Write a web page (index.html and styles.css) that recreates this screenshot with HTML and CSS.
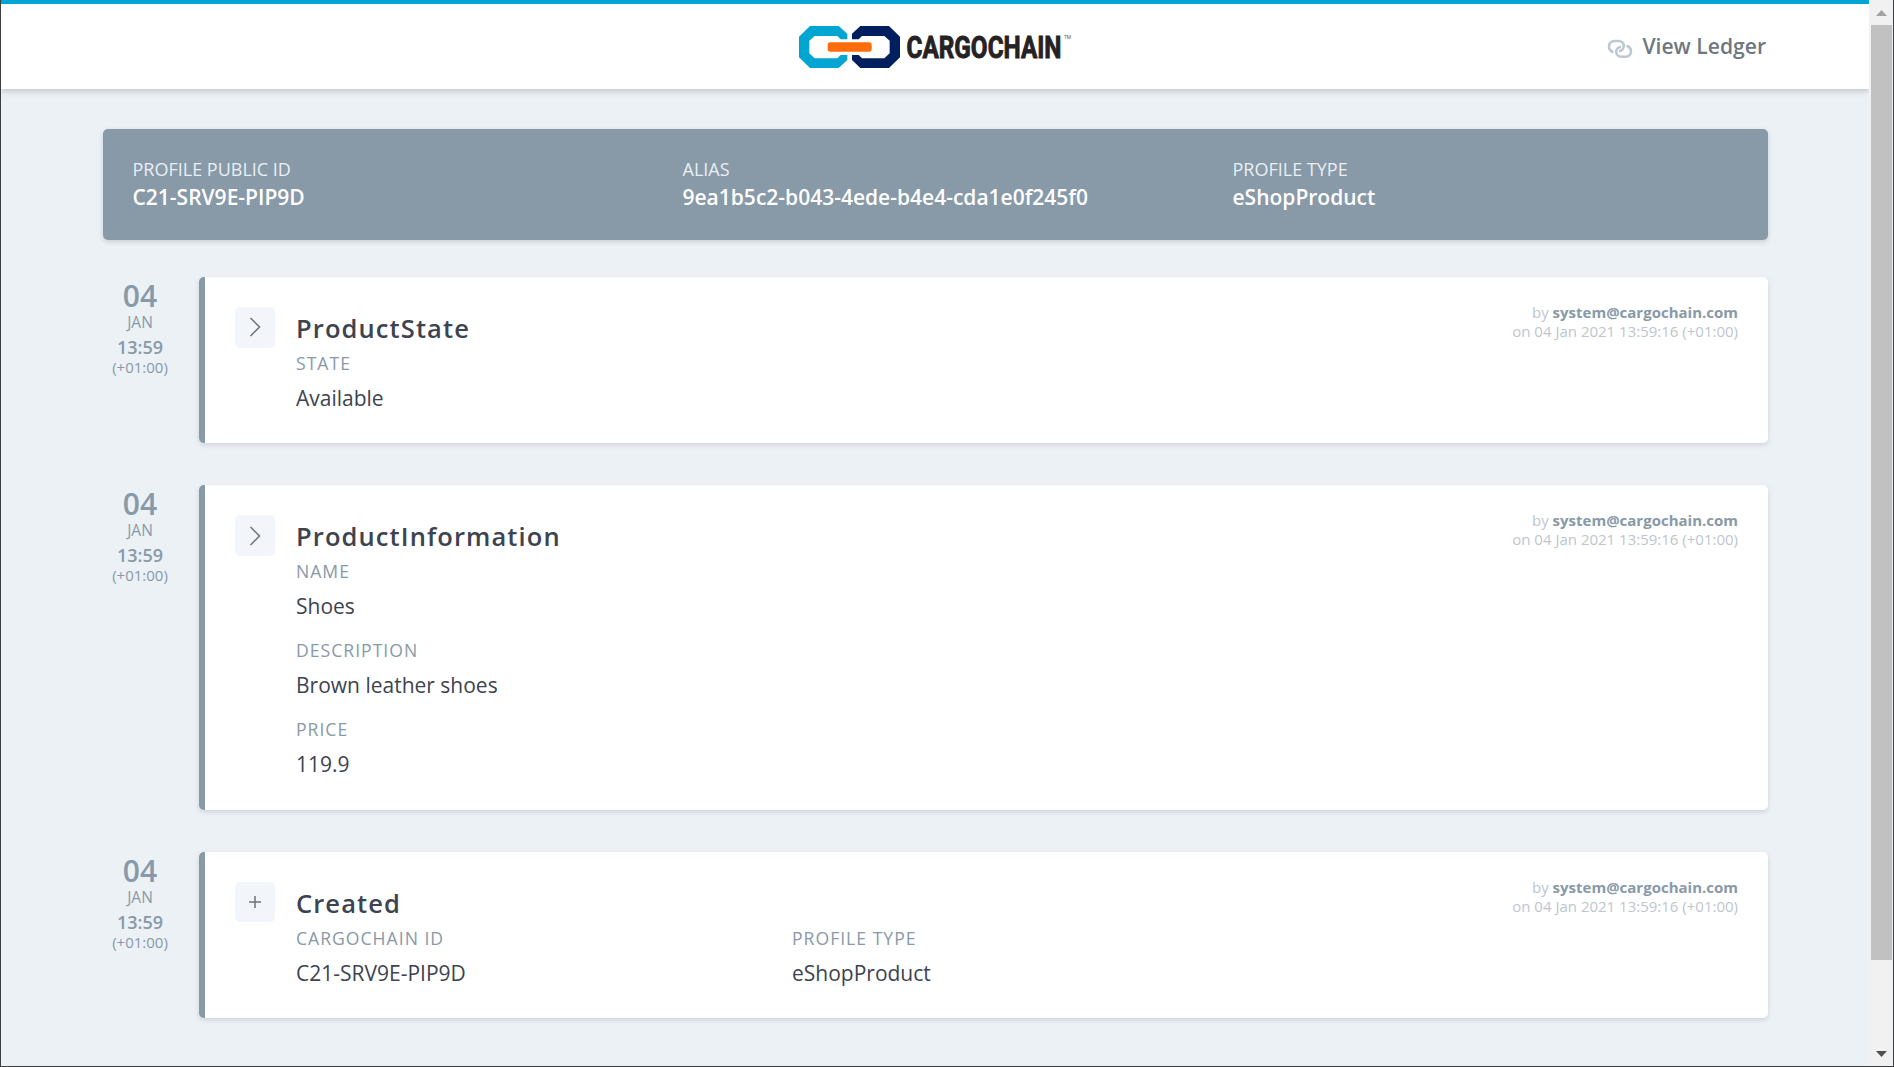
FILE: index.html
```html
<!DOCTYPE html>
<html lang="en">
<head>
<meta charset="utf-8">
<title>Cargochain</title>
<link rel="stylesheet" href="styles.css">
</head>
<body>
<div class="window">
  <div class="page">
    <header class="topbar">
      <svg class="logo" width="274" height="46" viewBox="0 0 274 46">
        <g transform="translate(-17 -24) scale(.33333)">
          <path fill="#00a5d1" d="M90 78H176L202 101V118H182L172 108H104L88 122V160L104 175H172L182 165H202V180L176 204H90L57 172V110Z"/>
          <path fill="#001f5f" d="M327 78H241L216 101V118H236L246 108H313L329 122V160L313 175H246L236 165H216V180L241 204H327L360 172V110Z"/>
          <rect x="143" y="127" width="132" height="28" rx="8" fill="#ff6c0c"/>
        </g>
        <text class="logo-word" x="109.500" y="34" textLength="155" lengthAdjust="spacingAndGlyphs">CARGOCHAIN</text>
        <text class="logo-tm" x="267" y="14.500" textLength="7" lengthAdjust="spacingAndGlyphs">TM</text>
      </svg>
      <a class="ledger">
        <svg width="26" height="20" viewBox="0 0 26 20" fill="none" stroke="#bcc7cf" stroke-width="2.500">
          <path d="M6.500 13.200C3.300 12.300 2 9.800 2 7.200C2 4 4.300 2 7.500 2H11.500C14.700 2 16.800 4.200 16.800 7C16.800 9.800 14.700 12 12 12"/>
          <path d="M19.500 6.800C22.700 7.700 24 10.200 24 12.500C24 15.700 21.700 17.800 18.500 17.800H14.500C11.300 17.800 9.200 15.600 9.200 13C9.200 10.200 11.300 8 14 8"/>
        </svg>
        <span>View Ledger</span>
      </a>
    </header>
    <main class="content">
      <section class="profile">
        <div><div class="profile-label">PROFILE PUBLIC ID</div><div class="profile-value">C21-SRV9E-PIP9D</div></div>
        <div><div class="profile-label">ALIAS</div><div class="profile-value">9ea1b5c2-b043-4ede-b4e4-cda1e0f245f0</div></div>
        <div><div class="profile-label">PROFILE TYPE</div><div class="profile-value">eShopProduct</div></div>
      </section>
      <article class="event">
        <div class="when"><div class="day">04</div><div class="month">JAN</div><div class="time">13:59</div><div class="zone">(+01:00)</div></div>
        <div class="card">
          <div class="badge"><svg width="40" height="40" viewBox="0 0 40 40"><path d="M15.500 11L24.500 20L15.500 29"/></svg></div>
          <div class="details">
            <h2>ProductState</h2>
            <div class="fields"><div class="field"><div class="label">STATE</div><div class="value">Available</div></div></div>
          </div>
          <div class="author"><div>by <b>system@cargochain.com</b></div><div>on 04 Jan 2021 13:59:16 (+01:00)</div></div>
        </div>
      </article>
      <article class="event">
        <div class="when"><div class="day">04</div><div class="month">JAN</div><div class="time">13:59</div><div class="zone">(+01:00)</div></div>
        <div class="card card-tall">
          <div class="badge"><svg width="40" height="40" viewBox="0 0 40 40"><path d="M15.500 12L24.500 21L15.500 30"/></svg></div>
          <div class="details">
            <h2>ProductInformation</h2>
            <div class="fields"><div class="field"><div class="label">NAME</div><div class="value">Shoes</div></div>
            <div class="field"><div class="label">DESCRIPTION</div><div class="value">Brown leather shoes</div></div>
            <div class="field"><div class="label">PRICE</div><div class="value">119.9</div></div></div>
          </div>
          <div class="author"><div>by <b>system@cargochain.com</b></div><div>on 04 Jan 2021 13:59:16 (+01:00)</div></div>
        </div>
      </article>
      <article class="event">
        <div class="when"><div class="day">04</div><div class="month">JAN</div><div class="time">13:59</div><div class="zone">(+01:00)</div></div>
        <div class="card">
          <div class="badge badge-square"><svg width="40" height="40" viewBox="0 0 40 40"><path d="M14 20H26M20 14V26"/></svg></div>
          <div class="details">
            <h2>Created</h2>
            <div class="fields fields-pair"><div class="field"><div class="label">CARGOCHAIN ID</div><div class="value">C21-SRV9E-PIP9D</div></div>
            <div class="field"><div class="label">PROFILE TYPE</div><div class="value">eShopProduct</div></div></div>
          </div>
          <div class="author"><div>by <b>system@cargochain.com</b></div><div>on 04 Jan 2021 13:59:16 (+01:00)</div></div>
        </div>
      </article>
    </main>
  </div>
  <div class="scrollbar">
    <svg class="arrow" width="22" height="25" viewBox="0 0 22 25"><path fill="#a3a3a3" d="M5 16L10.500 10L16 16Z"/></svg>
    <div class="thumb"></div>
    <svg class="arrow" width="22" height="25" viewBox="0 0 22 25"><path fill="#505050" d="M5 10H16L10.500 16Z"/></svg>
  </div>
</div>
</body>
</html>
```
FILE: styles.css
```css
* { box-sizing: border-box; }
body { margin: 0; font-family: "Open Sans", "Noto Sans", sans-serif; }
.window { display: flex; width: 1894px; height: 1067px; overflow: hidden; border: 1px solid #3c3e40; border-top: 0; background: #ecf1f5; }
.page { flex: 1; min-width: 0; }
.topbar { display: grid; grid-template-columns: 1fr 274px 1fr; align-items: start; height: 89px; padding: 20px 103px 0 101px; border-top: 4px solid #00a5d4; background: #fff; box-shadow: 0 2px 6px rgba(60, 75, 90, .28); }
.logo { grid-column: 2; overflow: visible; }
.logo-word { font: 700 31px Roboto, sans-serif; fill: #262223; stroke: #262223; stroke-width: .9px; }
.logo-tm { font: 400 5px Roboto, sans-serif; fill: #555; }
.ledger { display: flex; justify-content: flex-end; gap: 9px; font-size: 21.1px; font-weight: 600; line-height: 44px; color: #6e7780; }
.ledger svg { margin-top: 15px; }
.content { padding: 40px 101px 0 102px; }
.profile { display: grid; grid-template-columns: 550px 550px 1fr; height: 111px; padding: 26px 29.5px; margin-bottom: 37px; border-radius: 5px; background: #8899a8; color: #fff; box-shadow: 0 2px 5px rgba(60, 75, 90, .2); }
.profile-label { font-size: 18px; line-height: 28px; color: #e9eff5; }
.profile-value { font-size: 21px; font-weight: 600; line-height: 28px; }
.event { display: flex; margin-bottom: 42px; }
.when { width: 74px; margin-right: 22px; text-align: center; color: #8899a8; }
.day { font-size: 30px; font-weight: 600; line-height: 38px; }
.month { font-size: 15.5px; line-height: 14px; }
.time { margin-top: 3px; font-size: 18px; font-weight: 600; line-height: 30px; }
.zone { margin-top: -3px; font-size: 15px; line-height: 16px; }
.card { display: flex; flex: 1; min-height: 166px; padding: 30px 30px 28px; border-left: 6px solid #8899a8; border-radius: 5px; background: #fff; box-shadow: 0 2px 5px rgba(60, 75, 90, .18); }
.card-tall { min-height: 325px; }
.badge { width: 40px; height: 41px; margin-right: 21px; border-radius: 5px; background: #f2f5fa; }
.badge-square { height: 40px; }
.badge svg { display: block; fill: none; stroke: #6c7279; stroke-width: 1.5; }
.details { flex: 1; }
h2 { margin: 0; font-size: 25.5px; font-weight: 600; line-height: 42px; letter-spacing: 1.1px; color: #3d4350; }
.fields { display: grid; row-gap: 13.5px; }
.fields-pair { grid-template-columns: 496px 1fr; }
.label { font-size: 17.6px; line-height: 28px; letter-spacing: 1px; color: #8899a8; }
.value { margin-top: 3.5px; font-size: 21px; line-height: 34px; color: #3d4350; }
.author { margin-top: -4px; font-size: 15px; line-height: 19px; text-align: right; color: #bdc6ce; }
.author b { color: #8899a8; }
.scrollbar { display: flex; flex-direction: column; width: 24px; padding-left: 2px; background: #f1f1f1; }
.arrow { display: block; }
.thumb { width: 21px; height: 935px; margin-bottom: 81px; background: #c1c1c1; }
```
